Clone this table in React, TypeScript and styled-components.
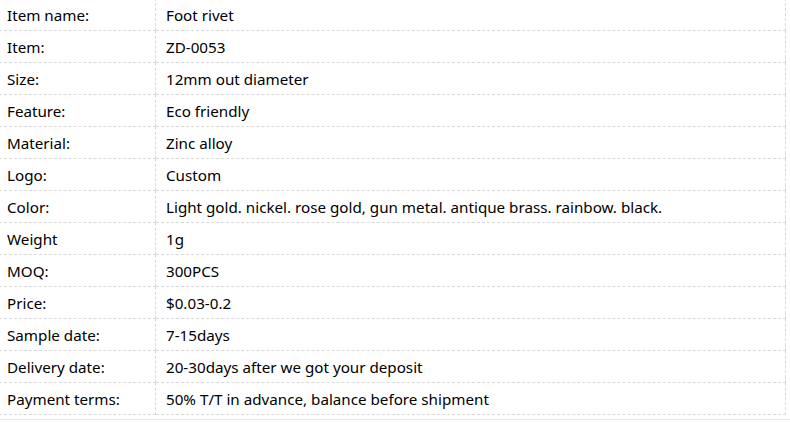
import React from "react";
import styled, { createGlobalStyle } from "styled-components";

const Global = createGlobalStyle`
  html, body { margin: 0; padding: 0; background: #fff; }
  body { font-family: "Noto Sans", "Open Sans", sans-serif; overflow: hidden; }
`;

const Wrapper = styled.div`
  width: 790px;
  height: 420px;
  overflow: hidden;
  border-bottom: 1px solid #e6e6e6;
  box-sizing: border-box;
`;

const Table = styled.table`
  border-collapse: collapse;
  margin-top: -2px;
  margin-left: -1px;
  width: 787px;
  table-layout: fixed;
`;

const Cell = styled.td<{ $label?: boolean }>`
  border: 1px dashed #d9d9d9;
  height: 32px;
  padding: 1px 0 0 ${(p) => (p.$label ? "7px" : "10px")};
  box-sizing: border-box;
  font-size: 15.2px;
  line-height: 20px;
  color: #000;
  white-space: nowrap;
  vertical-align: middle;
  width: ${(p) => (p.$label ? "156px" : "auto")};
`;

const rows: [string, string][] = [
  ["Item name:", "Foot rivet"],
  ["Item:", "ZD-0053"],
  ["Size:", "12mm out diameter"],
  ["Feature:", "Eco friendly"],
  ["Material:", "Zinc alloy"],
  ["Logo:", "Custom"],
  ["Color:", "Light gold. nickel. rose gold, gun metal. antique brass. rainbow. black."],
  ["Weight", "1g"],
  ["MOQ:", "300PCS"],
  ["Price:", "$0.03-0.2"],
  ["Sample date:", "7-15days"],
  ["Delivery date:", "20-30days after we got your deposit"],
  ["Payment terms:", "50% T/T in advance, balance before shipment"],
];

export default function App() {
  return (
    <>
      <Global />
      <Wrapper>
        <Table>
          <tbody>
            {rows.map(([k, v]) => (
              <tr key={k}>
                <Cell $label>{k}</Cell>
                <Cell>{v}</Cell>
              </tr>
            ))}
          </tbody>
        </Table>
      </Wrapper>
    </>
  );
}
